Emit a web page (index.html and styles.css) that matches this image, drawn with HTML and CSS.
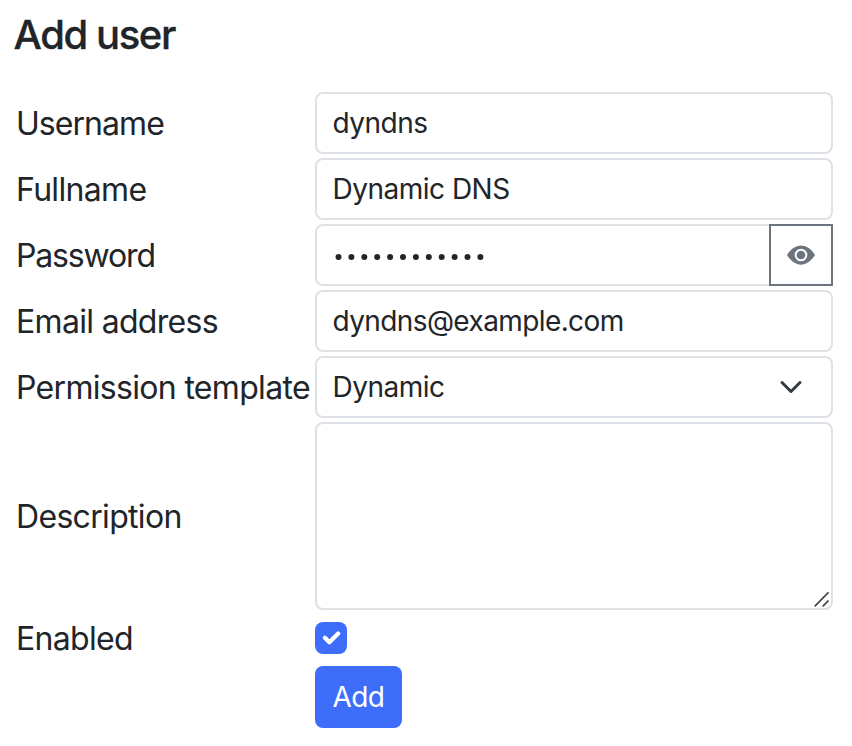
FILE: index.html
```html
<!DOCTYPE html>
<html lang="en">
<head>
<meta charset="utf-8">
<title>Add user</title>
<link rel="stylesheet" href="styles.css">
</head>
<body>
<main>
  <h1>Add user</h1>
  <form class="form">
    <label class="tight">Username</label>
    <div class="control">dyndns</div>
    <label>Fullname</label>
    <div class="control">Dynamic DNS</div>
    <label class="tighter">Password</label>
    <div class="group">
      <div class="control password">
        <svg width="152" height="8" viewBox="0 0 152 8" fill="#212529"><circle cx="3.5" cy="4" r="3"/><circle cx="16.4" cy="4" r="3"/><circle cx="29.3" cy="4" r="3"/><circle cx="42.2" cy="4" r="3"/><circle cx="55.1" cy="4" r="3"/><circle cx="68" cy="4" r="3"/><circle cx="80.9" cy="4" r="3"/><circle cx="93.8" cy="4" r="3"/><circle cx="106.7" cy="4" r="3"/><circle cx="119.6" cy="4" r="3"/><circle cx="132.5" cy="4" r="3"/><circle cx="145.4" cy="4" r="3"/></svg>
      </div>
      <button type="button" class="reveal" aria-label="Show password">
        <svg width="28" height="28" viewBox="0 0 16 16"><path fill="#6c757d" d="M0 8s3-5.5 8-5.5S16 8 16 8s-3 5.5-8 5.5S0 8 0 8"/><circle cx="8" cy="8" r="3.05" fill="none" stroke="#fff" stroke-width="1.1"/></svg>
      </button>
    </div>
    <label>Email address</label>
    <div class="control email">dyndns@example.com</div>
    <label>Permission template</label>
    <div class="control select">Dynamic
      <svg width="24" height="24" viewBox="0 0 16 16"><path fill="none" stroke="#343a40" stroke-linecap="round" stroke-linejoin="round" stroke-width="2" d="m2 5 6 6 6-6"/></svg>
    </div>
    <label>Description</label>
    <div class="control area">
      <svg width="16" height="16" viewBox="0 0 16 16"><path d="M1.7 15.3 15.5 1.3M9.7 15.3l5.8-5.8" fill="none" stroke="#444" stroke-width="1.7"/></svg>
    </div>
    <label>Enabled</label>
    <div class="check"><svg width="32" height="32" viewBox="0 0 20 20"><path fill="none" stroke="#fff" stroke-linecap="round" stroke-linejoin="round" stroke-width="2.7" d="m6.2 9.9 2.8 2.8 5.5-5.5"/></svg></div>
    <button type="button" class="submit">Add</button>
  </form>
</main>
</body>
</html>
```
FILE: styles.css
```css
* { box-sizing: border-box; }
body { margin: 0; background: #fff; color: #212529; font-family: Inter, sans-serif; }
main { padding: 12px 19px 0 15px; }
h1 { margin: 0 0 0 -1.5px; height: 80px; font-size: 40px; line-height: 46px; font-weight: 500; letter-spacing: -1.4px; -webkit-text-stroke: 0.3px #212529; }
.form { display: grid; grid-template-columns: 300px 518px; grid-template-rows: 62px 62px 62px 62px 62px 188px 48px 62px; row-gap: 4px; align-items: center; }
label { padding: 2px 0 0 1px; font-size: 32px; line-height: 48px; letter-spacing: -0.68px; white-space: nowrap; }
.tight { letter-spacing: -0.95px; }
.tighter { letter-spacing: -1.15px; }
.control { display: flex; align-items: center; height: 62px; width: 100%; padding: 0 16px 0 15.5px; border: 2px solid #dee2e6; border-radius: 8px; font-size: 28px; letter-spacing: -0.5px; white-space: nowrap; }
.email { letter-spacing: -0.6px; }
.group { display: flex; }
.password { flex: 1; padding: 3px 0 0 17.5px; border-radius: 8px 0 0 8px; border-right: 0; }
.reveal { display: flex; align-items: center; justify-content: center; width: 64px; height: 62px; padding: 0; background: #fff; border: 2px solid #6c757d; }
.select { justify-content: space-between; padding-right: 28px; }
.area { height: 188px; align-items: flex-end; justify-content: flex-end; padding: 0 2px 1px; }
.check { width: 32px; height: 32px; background: #3d6df9; border-radius: 8px; }
.check svg, .control svg, .reveal svg { display: block; }
.submit { grid-column: 2; width: 87px; height: 62px; padding: 0; border: 0; border-radius: 8px; background: #3d6df9; color: #fff; font: 28px Inter, sans-serif; letter-spacing: -0.6px; }
```
